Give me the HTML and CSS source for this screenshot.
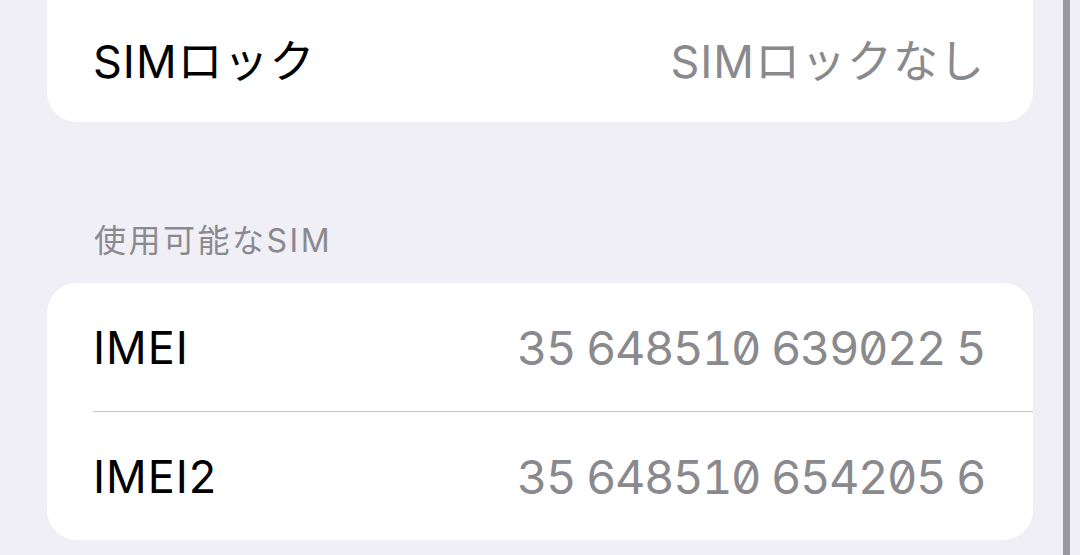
FILE: index.html
```html
<!DOCTYPE html>
<html lang="ja">
<head>
<meta charset="utf-8" />
<meta name="viewport" content="width=device-width,initial-scale=1.0"/>
<link rel="stylesheet" href="styles.css">
</head>
<body>
<div class="screen">
  <div class="content">
    <div class="group first">
      <div class="row">
        <span class="label">SIMロック</span>
        <span class="value">SIMロックなし</span>
      </div>
    </div>

    <div class="section-title">使用可能なSIM</div>

    <div class="group">
      <div class="row">
        <span class="label">IMEI</span>
        <span class="value num">35 648510 639022 5</span>
      </div>
      <div class="row">
        <span class="label">IMEI2</span>
        <span class="value num">35 648510 654205 6</span>
      </div>
    </div>
  </div>
  <div class="edge"></div>
</div>
</body>
</html>
```

FILE: styles.css
```css
body {
     margin:0;
     padding:0;
     background:#f0eff5;
     font-family:"Inter","Noto Sans CJK JP",sans-serif;
     color:#000000;
}

.screen {
     display:flex;
     height:555px;
     overflow:hidden;
}

.content {
     flex:1;
     padding:0 30px 0 47px;
}

.edge {
     width:7px;
     background:#99989e;
     margin-right:10px;
}

.group {
     background:#ffffff;
     border-radius:30px;
     overflow:hidden;
}

.group.first {
     margin-top:-6px;
     border-top-left-radius:0;
     border-top-right-radius:0;
}

.row {
     display:flex;
     align-items:center;
     justify-content:space-between;
     height:128px;
     margin-left:46px;
     padding-right:48px;
}

.row + .row {
     border-top:1px solid #c8c7cc;
}

.label {
     font-size:45px;
     letter-spacing:1px;
}

.value {
     font-size:45px;
     color:#8a8a8e;
     letter-spacing:1px;
}

.num {
     font-size:47px;
     font-feature-settings:"tnum","zero";
     letter-spacing:-1.5px;
}

.section-title {
     padding:100px 0 23px 47px;
     font-size:32px;
     line-height:38px;
     letter-spacing:2.5px;
     color:#8a8a8e;
}
```
